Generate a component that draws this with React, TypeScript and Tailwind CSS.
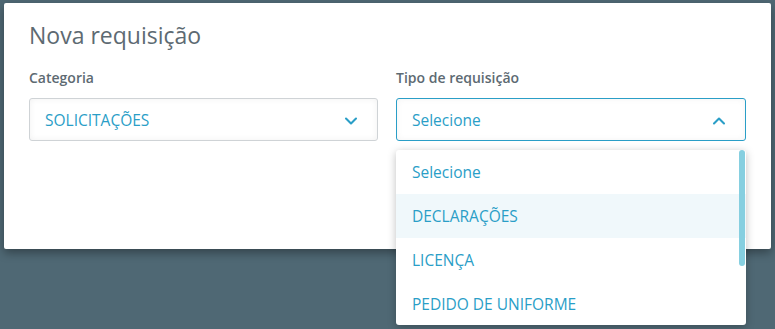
import { ChevronDown, ChevronUp } from 'lucide-react'

const options = ['Selecione', 'DECLARAÇÕES', 'LICENÇA', 'PEDIDO DE UNIFORME']

export default function App() {
  return (
    <div className="h-[329px] w-full overflow-hidden bg-[#4f6874] pt-[3px] pl-[4px] pr-[4px] font-['Open_Sans',sans-serif]">
      <div className="relative h-[246px] w-[767px] rounded-[2px] bg-white px-[25px] pt-[17px] shadow-[0_4px_10px_rgba(0,0,0,0.35)]">
        <h1 className="text-[23px] leading-[30px] text-[#5d6a72]">Nova requisição</h1>

        <div className="mt-[19px] flex gap-[18px]">
          <div className="w-[350px]">
            <div className="text-[14px] font-semibold leading-[18px] text-[#5d6a72]">Categoria</div>
            <div className="mt-[11px] flex h-[43px] items-center justify-between rounded-[3px] border border-[#cfd3d6] pt-[2px] pl-[15px] pr-[16px] shadow-[inset_0_0_6px_rgba(0,0,0,0.06)]">
              <span className="text-[15.5px] text-[#2a9ec7]">SOLICITAÇÕES</span>
              <ChevronDown className="h-[20px] w-[20px] text-[#2a9ec7]" strokeWidth={2.5} />
            </div>
          </div>

          <div className="relative w-[351px]">
            <div className="text-[14px] font-semibold leading-[18px] text-[#5d6a72]">Tipo de requisição</div>
            <div className="mt-[11px] flex h-[43px] items-center justify-between rounded-[3px] border border-[#2a9ec7] pt-[2px] pl-[15px] pr-[16px] shadow-[inset_0_0_6px_rgba(0,0,0,0.05)]">
              <span className="text-[15.5px] text-[#2a9ec7]">Selecione</span>
              <ChevronUp className="h-[20px] w-[20px] text-[#2a9ec7]" strokeWidth={2.5} />
            </div>

            <div className="mt-[42px] flex justify-end">
              <div className="h-[41px] w-[110px] rounded-[3px] bg-[#1a7f9e]" />
            </div>

            <div className="absolute left-0 top-[81px] z-10 h-[175px] w-[350px] overflow-hidden rounded-[3px] bg-white shadow-[0_2px_8px_rgba(0,0,0,0.25)]">
              {options.map((o, i) => (
                <div
                  key={o}
                  className={`flex h-[44px] items-center px-[16px] pt-[1px] text-[15.5px] text-[#2a9ec7] ${i === 1 ? 'bg-[#f0f8fb]' : ''}`}
                >
                  {o}
                </div>
              ))}
              <div className="absolute right-[1px] top-0 h-[116px] w-[6px] rounded-[3px] bg-[#86cfe0]" />
            </div>
          </div>
        </div>
      </div>
    </div>
  )
}
